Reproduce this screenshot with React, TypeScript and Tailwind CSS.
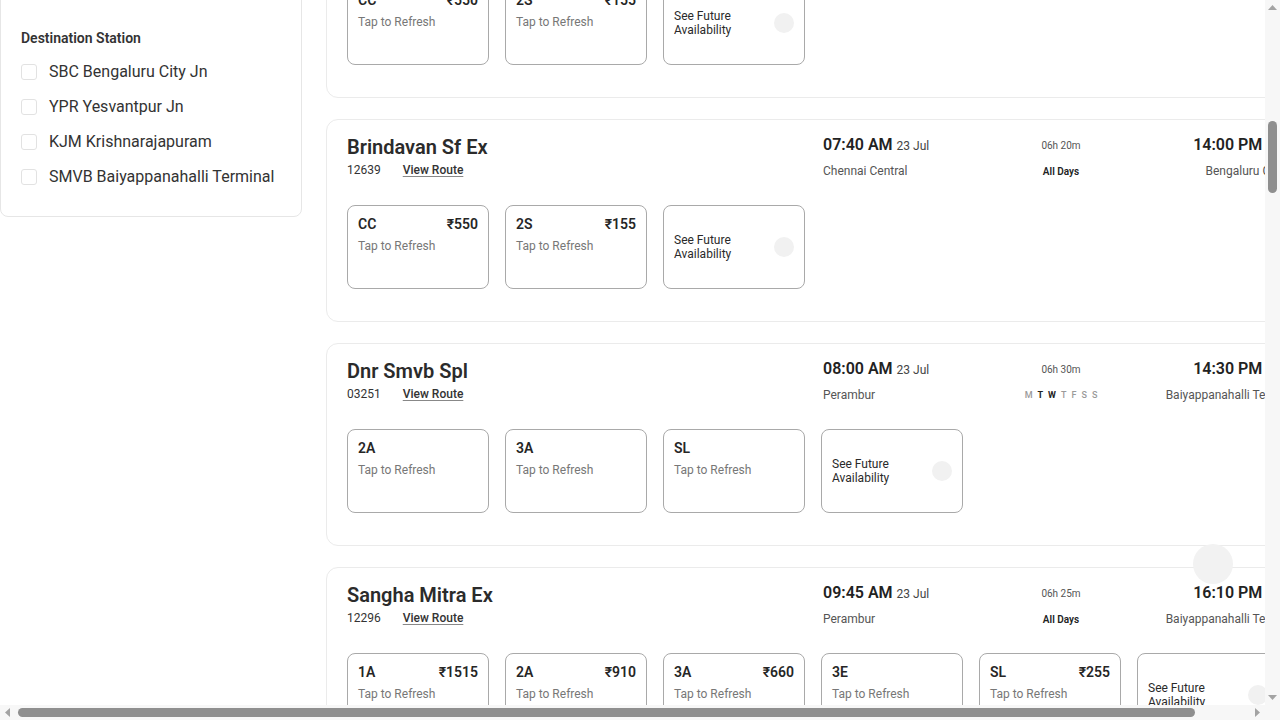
import { useLayoutEffect, useRef } from "react";

type Fare = { cls: string; price?: string };
type Train = {
  name: string;
  no: string;
  dep: string;
  depStn: string;
  dur: string;
  arr: string;
  arrStn: string;
  days: "all" | number[];
  fares: Fare[];
};

const cc: Fare[] = [
  { cls: "CC", price: "₹550" },
  { cls: "2S", price: "₹155" },
];

const visible: Train[] = [
  {
    name: "Shatabdi Exp",
    no: "12027",
    dep: "06:00 AM",
    depStn: "Chennai Central",
    dur: "05h 00m",
    arr: "11:00 AM",
    arrStn: "Bengaluru City Jn",
    days: "all",
    fares: cc,
  },
  {
    name: "Brindavan Sf Ex",
    no: "12639",
    dep: "07:40 AM",
    depStn: "Chennai Central",
    dur: "06h 20m",
    arr: "14:00 PM",
    arrStn: "Bengaluru City Jn",
    days: "all",
    fares: cc,
  },
  {
    name: "Dnr Smvb Spl",
    no: "03251",
    dep: "08:00 AM",
    depStn: "Perambur",
    dur: "06h 30m",
    arr: "14:30 PM",
    arrStn: "Baiyappanahalli Terminal",
    days: [1, 2],
    fares: [{ cls: "2A" }, { cls: "3A" }, { cls: "SL" }],
  },
  {
    name: "Sangha Mitra Ex",
    no: "12296",
    dep: "09:45 AM",
    depStn: "Perambur",
    dur: "06h 25m",
    arr: "16:10 PM",
    arrStn: "Baiyappanahalli Terminal",
    days: "all",
    fares: [
      { cls: "1A", price: "₹1515" },
      { cls: "2A", price: "₹910" },
      { cls: "3A", price: "₹660" },
      { cls: "3E" },
      { cls: "SL", price: "₹255" },
    ],
  },
];

const fillerNames = [
  "Chennai Mail",
  "Lalbagh Exp",
  "Kaveri Express",
  "Mysuru Exp",
  "Bengaluru Mail",
  "Double Decker",
  "Mas Sbc Spl",
  "Ypr Garib Rath",
  "Tpty Sbc Exp",
  "Humsafar Exp",
  "Vande Bharat",
  "Mangaluru Mail",
  "West Coast Exp",
  "Kacheguda Exp",
  "Ers Sbc Spl",
  "Sbc Intercity",
  "Mas Mys Exp",
  "Chamundi Exp",
  "Rajya Rani Exp",
  "Malgudi Exp",
  "Hampi Express",
  "Udyan Express",
  "Kanyakumari Ex",
  "Island Express",
  "Sampark Kranti",
];

const fillerTrain = (name: string, i: number): Train => ({
  name,
  no: String(12600 + i * 7),
  dep: "10:30 PM",
  depStn: "Chennai Central",
  dur: "06h 10m",
  arr: "04:40 AM",
  arrStn: "Bengaluru City Jn",
  days: "all",
  fares: [
    { cls: "3A", price: "₹720" },
    { cls: "SL", price: "₹270" },
  ],
});

const before = fillerNames.slice(0, 4).map(fillerTrain);
const after = fillerNames.slice(4, 25).map((n, i) => fillerTrain(n, i + 4));
const trains: Train[] = [...before, ...visible, ...after];
const anchorIndex = before.length + 1;

const DayLetters = ({ active }: { active: number[] }) => {
  const letters = ["M", "T", "W", "T", "F", "S", "S"];
  return (
    <div className="flex gap-[5px] text-[9px] font-medium leading-4">
      {letters.map((l, i) => (
        <span
          key={i}
          className={active.includes(i) ? "font-bold text-[#222]" : "text-[#9a9a9a]"}
        >
          {l}
        </span>
      ))}
    </div>
  );
};

const FareBox = ({ fare }: { fare: Fare }) => (
  <div className="h-[84px] w-[142px] shrink-0 rounded-lg border border-[#a9a9a9] bg-white px-[10px] pt-2">
    <div className="flex justify-between text-sm font-semibold leading-5 text-[#262626]">
      <span>{fare.cls}</span>
      {fare.price && <span>{fare.price}</span>}
    </div>
    <div className="mt-[4px] text-xs leading-4 text-[#777]">Tap to Refresh</div>
  </div>
);

const FutureBox = () => (
  <div className="flex h-[84px] w-[142px] shrink-0 items-center justify-between rounded-lg border border-[#a9a9a9] bg-white px-[10px]">
    <div className="w-[70px] text-xs leading-[14px] text-[#2a2a2a]">See Future Availability</div>
    <div className="h-5 w-5 rounded-full bg-[#f1f1f1]" />
  </div>
);

const TrainCard = ({ t, cardRef }: { t: Train; cardRef?: React.Ref<HTMLDivElement> }) => (
  <div ref={cardRef} className="shrink-0 rounded-xl border border-[#ebebeb] bg-white px-5 pb-8 pt-[13px]">
    <div className="flex items-start justify-between">
      <div>
        <div className="text-xl font-semibold leading-7 text-[#2b2b2b]">{t.name}</div>
        <div className="mt-px flex items-center text-xs leading-4 text-[#333]">
          <span>{t.no}</span>
          <span className="ml-[22px] font-medium text-[#333] underline decoration-[#888] underline-offset-2">View Route</span>
        </div>
      </div>
      <div className="grid w-[476px] grid-cols-[158px_160px_158px]">
        <div>
          <div className="flex h-6 items-baseline whitespace-nowrap text-[#222]">
            <span className="text-base font-semibold">{t.dep}</span>
            <span className="ml-1 text-xs text-[#444]">23 Jul</span>
          </div>
          <div className="mt-[6px] whitespace-nowrap text-xs leading-4 text-[#555]">{t.depStn}</div>
        </div>
        <div className="flex flex-col items-center">
          <div className="flex h-6 items-center text-[10px] text-[#555]">{t.dur}</div>
          <div className="mt-[6px] flex h-4 items-center">
            {t.days === "all" ? (
              <span className="text-[10px] font-semibold text-[#222]">All Days</span>
            ) : (
              <DayLetters active={t.days} />
            )}
          </div>
        </div>
        <div className="flex flex-col items-end">
          <div className="flex h-6 items-baseline whitespace-nowrap text-[#222]">
            <span className="text-base font-semibold">{t.arr}</span>
            <span className="ml-1 text-xs text-[#444]">23 Jul</span>
          </div>
          <div className="mt-[6px] whitespace-nowrap text-xs leading-4 text-[#555]">{t.arrStn}</div>
        </div>
      </div>
    </div>
    <div className="mt-[26px] flex gap-4">
      {t.fares.map((f, i) => (
        <FareBox key={i} fare={f} />
      ))}
      <FutureBox />
    </div>
  </div>
);

const CheckRow = ({ label }: { label: string }) => (
  <div className="flex h-[35px] items-center">
    <span className="h-4 w-4 shrink-0 rounded-[3px] border border-[#e2e2e2] bg-white" />
    <span className="ml-3 text-base text-[#333]">{label}</span>
  </div>
);

const Section = ({ title, items }: { title: string; items: string[] }) => (
  <div className="pt-5">
    <div className="text-sm font-semibold leading-5 text-[#333]">{title}</div>
    <div className="mt-[6px] flex flex-col">
      {items.map((it) => (
        <CheckRow key={it} label={it} />
      ))}
    </div>
  </div>
);

const TimeSlots = ({ title }: { title: string }) => (
  <div className="pt-5">
    <div className="text-sm font-semibold leading-5 text-[#333]">{title}</div>
    <div className="mt-3 grid grid-cols-2 gap-2">
      {["00:00 - 06:00", "06:00 - 12:00", "12:00 - 18:00", "18:00 - 24:00"].map((s) => (
        <div key={s} className="flex h-[56px] items-center justify-center rounded-lg border border-[#e2e2e2] text-xs text-[#444]">
          {s}
        </div>
      ))}
    </div>
  </div>
);

const Arrow = ({ dir }: { dir: "up" | "down" | "left" | "right" }) => {
  const pts = {
    up: "0,6 4.5,1 9,6",
    down: "0,1 4.5,6 9,1",
    left: "6,0 1,4.5 6,9",
    right: "1,0 6,4.5 1,9",
  }[dir];
  const vertical = dir === "up" || dir === "down";
  return (
    <div className="flex h-[15px] w-[15px] shrink-0 items-center justify-center">
      <svg width={vertical ? 9 : 7} height={vertical ? 7 : 9} viewBox={vertical ? "0 0 9 7" : "0 0 7 9"}>
        <polygon points={pts} fill="#a3a3a3" />
      </svg>
    </div>
  );
};

const Scrollbars = () => (
  <>
    <div className="pointer-events-none fixed right-0 top-0 flex h-[705px] w-[15px] flex-col items-center bg-[#f7f7f7]">
      <Arrow dir="up" />
      <div className="mt-[106px] h-[72px] w-[9px] rounded-full bg-[#8f8f8f]" />
      <div className="flex-1" />
      <Arrow dir="down" />
    </div>
    <div className="pointer-events-none fixed bottom-0 left-0 flex h-[15px] w-[1265px] items-center bg-[#f7f7f7]">
      <Arrow dir="left" />
      <div className="ml-[3px] h-[9px] w-[1177px] rounded-full bg-[#8f8f8f]" />
      <div className="flex-1" />
      <Arrow dir="right" />
    </div>
    <div className="pointer-events-none fixed bottom-0 right-0 h-[15px] w-[15px] bg-[#f7f7f7]" />
  </>
);

export default function App() {
  const scRef = useRef<HTMLDivElement>(null);
  const cardRef = useRef<HTMLDivElement>(null);

  useLayoutEffect(() => {
    const sc = scRef.current;
    const c = cardRef.current;
    if (!sc || !c) return;
    const top = c.getBoundingClientRect().top - sc.getBoundingClientRect().top + sc.scrollTop;
    sc.scrollTop = top - 119;
    sc.scrollLeft = 8;
  }, []);

  return (
    <div
      ref={scRef}
      className="h-screen w-screen overflow-hidden bg-white"
      style={{ fontFamily: "Roboto, 'Noto Sans', Arial, sans-serif" }}
    >
      <div className="flex w-[1341px] items-start gap-[24px] px-2 pb-8 pt-4">
        <aside className="w-[302px] shrink-0 rounded-lg border border-[#e6e6e6] bg-white px-5 pb-[22px]">
          <div className="flex h-[57px] items-center justify-between">
            <span className="text-base font-semibold text-[#222]">Filters</span>
            <span className="text-xs font-medium text-[#333] underline">Clear All</span>
          </div>
          <Section title="Quick Filters" items={["AC Trains", "Available Trains", "Tatkal Available"]} />
          <Section
            title="Journey Class"
            items={["1A First AC", "2A Second AC", "3A Third AC", "3E AC 3 Economy", "CC Chair Car", "EC Executive Chair", "SL Sleeper", "2S Second Sitting"]}
          />
          <Section title="Quota" items={["General", "Tatkal"]} />
          <TimeSlots title="Departure Time" />
          <Section title="Source Station" items={["MAS Chennai Central", "PER Perambur", "MS Chennai Egmore", "TBM Tambaram"]} />
          <Section
            title="Destination Station"
            items={["SBC Bengaluru City Jn", "YPR Yesvantpur Jn", "KJM Krishnarajapuram", "SMVB Baiyappanahalli Terminal"]}
          />
        </aside>
        <main className="flex w-[994px] shrink-0 flex-col gap-[21px]">
          {trains.map((t, i) => (
            <TrainCard key={t.no + i} t={t} cardRef={i === anchorIndex ? cardRef : undefined} />
          ))}
        </main>
      </div>
      <div className="pointer-events-none fixed left-[1193px] top-[544px] h-10 w-10 rounded-full bg-[#f2f2f2]" />
      <Scrollbars />
    </div>
  );
}
